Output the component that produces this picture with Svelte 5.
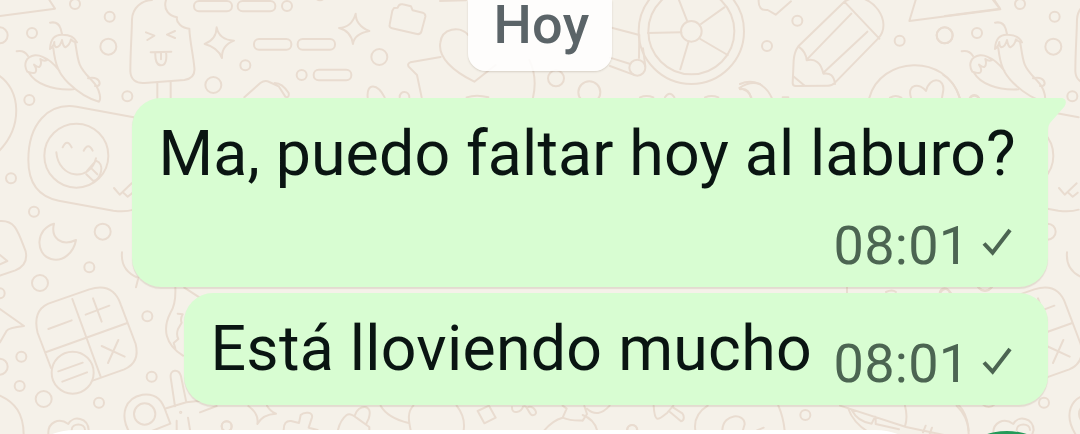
<script>
  const messages = [
    { text: 'Ma, puedo faltar hoy al laburo?', time: '08:01', first: true },
    { text: 'Está lloviendo mucho', time: '08:01', first: false }
  ];
</script>

<main class="chat">
  <svg class="wallpaper" viewBox="0 0 1080 434" aria-hidden="true">
    <defs>
      <g id="edge">
        <g transform="scale(.33333)">
          <path d="M0 48 165 26 148 0M150 68q25-5 32 18l4 16M50 154q22-5 34 14" />
          <circle cx="225" cy="12" r="15" /><circle cx="329" cy="50" r="15" /><circle cx="96" cy="99" r="15" />
          <circle cx="-1" cy="106" r="24" /><circle cx="325" cy="140" r="24" /><circle cx="88" cy="300" r="15" />
          <circle cx="382" cy="289" r="15" />
          <path d="M150 147q2-45 38-43 32 0 43 23-13-2-18-9-4 18-17 24-7-3-10-22-5 20-17 22-7-3-6-16-3 15-13 21ZM160 145c6 50 16 76 45 104 28 27 62 48 92 56 8-10 0-34-8-47-14-22-38-36-50-65-8-20-9-45-14-68M82 215c-13-22-5-45 23-49 17-1 32 8 36 14-8 4-15 1-20-3 3 10 3 19-3 24-6 2-12-5-16-7 7 10 9 17 4 23-5 5-14 0-24-2ZM87 218c18 32 70 54 133 50M126 170c17 6 35 20 52 42M264 235c20-6 35 3 35 16-2 7-8 8-14 7" />
          <path d="M472 294v-48m40 48v-50M498 0c-9 30 10 48 33 52-4 15 15 33 37 34 2 42 11 74 15 116 3 23-8 35-30 38l-119 9c-26 2-42-10-43-35 0-56 4-102 5-156C397 26 423 1 456 0M438 97l25 10-21 13M525 93l-24 11 24 10M452 157l62-2M466 158c-1 22 4 38 17 38 15 0 18-20 15-40M483 158v20" />
          <path d="M650 82q7 37 52 40-38 15-36 52-13-32-52-42 35-13 36-50Z" /><circle cx="640" cy="255" r="24" />
          <path d="M-5 225c67 43 76 153 0 230M401 352 230 320c-86-13-145 52-145 160 0 70 30 110 91 122l164 30q35 5 61-3" />
          <circle cx="229" cy="467" r="96" /><path d="M188 442q13-28 27 0m36 10q14-26 27 0M169 457c7 80 101 90 119 18m-27 38 27-31c28 8 15 58-8 61l-21-20m16-17 17 17M342 564l17 20 36-34m-24 29 12 11 15-12" />
        </g>
        <g transform="translate(0 140) scale(.33333)">
          <circle cx="33" cy="115" r="15" /><circle cx="102" cy="215" r="15" /><circle cx="308" cy="275" r="24" />
          <circle cx="268" cy="382" r="15" /><circle cx="120" cy="429" r="24" />
          <path d="M162 251c-54 14-59 91-9 106 35 10 68-18 75-57-43 20-77-5-66-49ZM0 243c45-3 53 28 77 91 6 29-6 47-31 57L0 407M0 345l22 18-22 10M366 337c-4 42 20 65 49 77l-7 28" />
        </g>
        <g transform="translate(0 280) scale(.33333)">
          <path d="M0 87 72 138q-47 6-52 14L0 187" /><circle cx="-1" cy="40" r="15" /><circle cx="64" cy="230" r="15" />
          <circle cx="59" cy="318" r="15" /><circle cx="-1" cy="260" r="24" /><circle cx="131" cy="357" r="24" />
          <circle cx="297" cy="368" r="15" /><circle cx="442" cy="109" r="15" /><circle cx="455" cy="290" r="15" />
          <path d="M153 264 113 159c-11-45 1-74 32-88L268 28c48-15 79 1 94 45l45 119c10 41-4 63-34 76L280 301M217 57l86 236M139 216l243-87M145 147l70-26m42-17 71-27m-49-22 26 70M305 198l69 32m-50 19 31-69" />
          <circle class="solid" cx="218" cy="278" r="63" /><path d="m175 274 73-26m-61 57 74-28M0 347c46 21 70 54 71 115M145 462c-2-35 32-51 60-30 15-28 59-18 61 18l-4 12m-47-12c0-22 40-22 40 0M526 23c1 24-1 55-15 76-24 47-16 94 38 128M553 23l45 29M533 101l15 2q-8 14-3 25l-11 19q-6 17 1 30l-14 12 5 16" />
          <path d="M391 462c-36-60-13-109 36-118 44-6 61 20 72 55l12 32-78 31M499 385l60-18q50-7 94-6M559 367l-16-78c-7-25-34-20-31 3l13 87M530 462v-40m42 40-8-49" />
          <circle cx="434" cy="402" r="32" /><circle cx="680" cy="439" r="15" /><circle cx="542" cy="397" r="2" />
        </g>
      </g>
    </defs>
    <use href="#edge" /><use href="#edge" x="945" />
    <g transform="translate(200 0) scale(.33333)">
      <rect x="-18" y="3" width="114" height="31" rx="15" /><rect x="113" y="3" width="113" height="31" rx="15" />
      <rect x="162" y="117" width="112" height="32" rx="15" /><rect x="293" y="117" width="112" height="32" rx="15" />
      <rect x="341" y="209" width="113" height="32" rx="15" />
      <circle cx="261" cy="18" r="15" /><circle cx="136" cy="196" r="15" /><circle cx="305" cy="225" r="15" />
      <circle cx="538" cy="171" r="24" /><circle cx="360" cy="-14" r="15" />
      <path d="M467 41q0 35 41 52-46 9-49 39-6-39-42-48 38-2 50-43ZM582 24l11-1q4-13 15-10l25 6 5 12 30 7q9 3 8 12l-12 45q-3 9-13 7l-75-17q-9-2-7-11l8-42ZM133 292l48-43q14-10 27-3l28 13 20 31M224 249c18 0 31 13 42 30q2 12-6 13M503 292c-4-46 30-41 51 0M599 292c0-22 29-20 29 0M722 171l-91 16q-10 4-5 13l25 25 14 67M823 245c-64-31-110-73-102-117 4-43 59-53 84-23M800 292q30-10 65 0M823 245l64-50" />
    </g>
    <g transform="translate(440 0) scale(.33333)">
      <circle cx="754" cy="94" r="31" /><circle cx="754" cy="94" r="129" /><circle cx="754" cy="94" r="158" />
      <path d="m742 64-31-79m72 87 70-50m-72 95 82 48m-117-41-25 84m3-111-100 2M515 83l83 22-1 69M510 173l61 19m-61 6 70 26M609 145l7 54M268 180q25 52 11 113M0 3l78-2M600 292q20-8 40 0M675 292q14-22 28 0M795 292q20-8 40 0M960 252q-31-10-62 12 28 6 36 28" />
      <circle cx="592" cy="203" r="24" /><circle cx="348" cy="235" r="24" /><circle cx="448" cy="277" r="33" />
    </g>
    <g transform="translate(740 0) scale(.33333)">
      <path d="M56 0q-2 33 27 30l24 14 46-40M313 5 175 139q-12 16-14 42l-3 68q0 9 9 9l97-1q13 0 21-9L414 116c48-50-19-139-81-121ZM313 5l105 111M334 41 201 178m181-83L250 218M175 139q24 17 25 42 40-9 50 40 31-6 35 31M160 229l34 28M527 0l-19 63 273-35-22-28M388 293c34-124 229-136 271 0M513 293c-14-42 28-45 45-20 10-46 60-40 51 3l-3 17M450 293q17-10 34 0M690 293q13-12 26 0M0 252c43-20 79 6 95 41M0 268q25-5 33 25M128 292h17" />
      <circle cx="172" cy="62" r="15" /><circle cx="81" cy="138" r="15" /><circle cx="479" cy="122" r="15" /><circle cx="614" cy="106" r="24" />
    </g>
    <g transform="translate(200 380) scale(.33333)">
      <path d="M0 97 50 78M145 78q33 24 27 54 15-29 56-31-17-7-27-24M251 149q0-28 22-26l24 6 5-24c10-10 38-10 34 7l-10 31 27 7M414 149q8-30 26-44 10-7 29 8l39 28v9M464 107c9-35 58-38 42 9l-8 17M542 77q20 36 84 52M640 77c-20 20-13 49-8 73M770 77q27 35 21 73M833 93l34-16 20 36-34 17ZM936 82c-1 23 28 15 33-2 14-9 16 25 29 26 22-2 3-31-13-25M1088 77l12 9-12 27c28 12 53 8 60 9l13-20-8-24M1088 113q-30 8-55 38M1148 105q34 13 43 45M1161 86q33 30 68-9" />
      <circle cx="80" cy="139" r="15" /><circle cx="1296" cy="150" r="15" />
    </g>
    <g transform="translate(620 380) scale(.33333)">
      <path d="M101 77c3 55 14 43 41 21l18-21M150 96l33 28c12-2 9-18 4-24l-27-17M263 77q-44 28-37 74M475 77q15 34 19 75M307 150c3-51 67-52 67-17l-5 17M411 151l20-8M660 77l198 64 190 40M684 84q15 44 61 72M695 90q18 35 60 41l10-21M767 114v18l70 16M855 77q9 34 0 62M1010 77q32 31 36 75M909 157l8-20M929 162l7-19" />
      <circle cx="37" cy="150" r="15" /><circle cx="556" cy="105" r="15" />
    </g>
    <path d="M847 287v6M886 292q6-3 10 0M940 293q5-8 11 0M978 287q7 7 14 0" />
  </svg>

  <div class="date">Hoy</div>

  <section class="messages">
    {#each messages as m}
      <article class="bubble" class:first={m.first}>
        {#if m.first}
          <svg class="tail" viewBox="0 0 48 32" aria-hidden="true"><path d="M0 0H43.5Q49 2 45.5 8.5L31 25Q29 27.5 29 32H0Z" /></svg>
        {/if}
        <span class="text">{m.text}</span>
        <span class="meta">
          <span class="time">{m.time}</span>
          <svg class="check" viewBox="0 0 30 28" aria-label="Enviado"><path d="m2 15.5 8.6 9.2L28 2" /></svg>
        </span>
      </article>
    {/each}
  </section>

  <div class="composer"><div class="field"></div><div class="mic"></div></div>
</main>

<style>
  :global(body) { margin: 0; }
  .chat {
    position: relative; width: 1080px; height: 434px; overflow: hidden;
    background: #f5f1e9; font-family: Roboto, sans-serif;
    display: flex; flex-direction: column;
  }
  .wallpaper { position: absolute; inset: 0; width: 1080px; height: 434px; fill: none; stroke: #e9dcd0; stroke-width: 2; stroke-linecap: round; stroke-linejoin: round; }
  .wallpaper g { stroke-width: 6; }
  .solid { fill: #f5f1e9; }
  .date {
    position: relative; box-sizing: border-box; width: 144px; height: 71px; margin-left: 468px; flex: none;
    border-radius: 0 0 18px 18px; background: rgba(255, 255, 255, .86); box-shadow: 0 1px 2px rgba(80, 60, 40, .18);
    padding-left: 3px; color: #5b6468; font-size: 54px; font-weight: 500; line-height: 50px; text-align: center; letter-spacing: .4px; white-space: nowrap;
  }
  .messages { position: relative; display: flex; flex-direction: column; align-items: flex-end; gap: 6px; padding: 27px 32px 0 0; }
  .bubble {
    position: relative; box-sizing: border-box; width: 864px; height: 112px; padding: 0 36px 0 26.5px;
    display: flex; justify-content: space-between; border-radius: 29px; background: #d8fdd2;
    box-shadow: 0 1.5px 1px rgba(110, 80, 50, .13);
  }
  .bubble.first { width: 916px; height: 189px; border-top-right-radius: 0; flex-direction: column; justify-content: flex-start; }
  .text { color: #0a1512; font-size: 62.6px; line-height: 74px; margin-top: 19px; letter-spacing: .15px; white-space: nowrap; }
  .bubble:not(.first) .text { letter-spacing: .28px; }
  .meta { display: flex; align-items: flex-start; gap: 12.5px; margin-top: 42px; color: #4c6552; }
  .first .meta { align-self: flex-end; margin-top: 26px; }
  .time { font-size: 54px; line-height: 58px; letter-spacing: .3px; }
  .check { width: 30px; height: 28px; margin-top: 12px; fill: none; stroke: #4c6552; stroke-width: 4; }
  .first .check { margin-top: 11px; }
  .tail { position: absolute; right: -19px; top: 0; width: 48px; height: 32px; fill: #d8fdd2; }
  .composer { position: relative; display: flex; margin-top: 25px; padding-left: 9px; height: 132px; flex: none; }
  .field { width: 932px; height: 132px; border-radius: 66px; background: #fff; }
  .mic { width: 132px; height: 132px; margin-top: 1px; border-radius: 50%; background: #249a59; }
</style>
